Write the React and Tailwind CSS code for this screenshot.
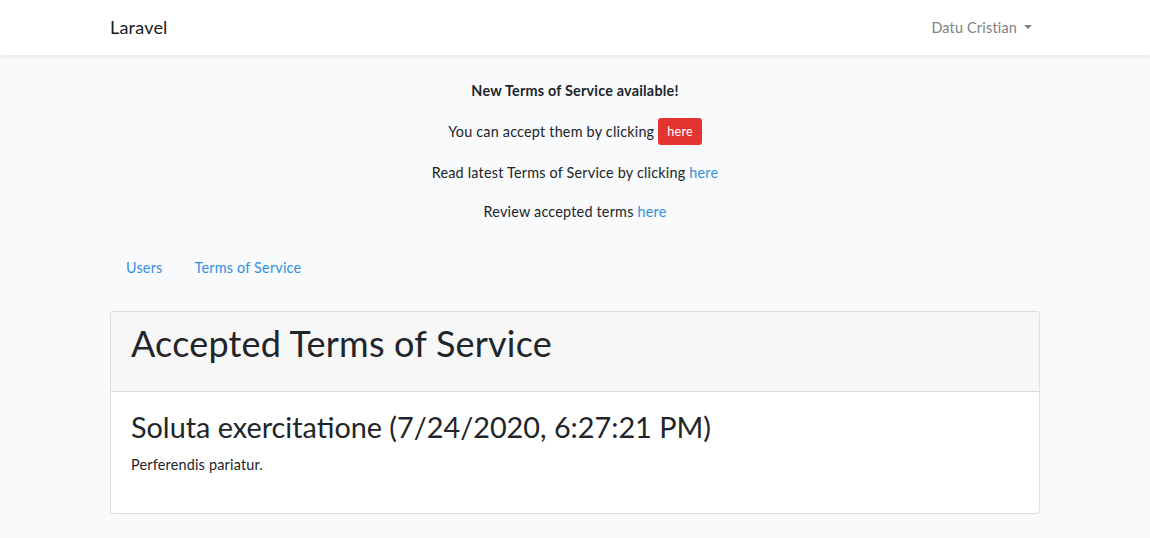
export default function App() {
  return (
    <div className="min-h-screen bg-[#f8fafc] text-[#212529] text-[14.4px] leading-[1.6] tracking-[0.014em]" style={{ fontFamily: "Lato, 'Noto Sans', sans-serif" }}>
      {/* Navbar */}
      <nav className="bg-white h-[55px] shadow-[0_2px_4px_rgba(0,0,0,0.075)]">
        <div className="w-[960px] mx-auto px-[15px] h-full flex items-center justify-between">
          <a className="text-[18px] text-[#1a1a1a]">Laravel</a>
          <a className="flex items-center pr-[8px] text-[#808080]">
            Datu Cristian
            <span className="ml-[7px] w-0 h-0 border-t-[4.5px] border-t-[#808080] border-x-[4.5px] border-x-transparent" />
          </a>
        </div>
      </nav>

      <main className="py-6">
        <div className="w-[960px] mx-auto px-[15px]">
          {/* Notice */}
          <div className="text-center">
            <p className="font-bold mb-4">New Terms of Service available!</p>
            <p className="mb-4 flex items-center justify-center">
              You can accept them by clicking
              <a className="ml-[4px] bg-[#e3342f] text-white text-[12.6px] rounded-[3px] px-[9px] h-[27px] leading-[27px]">here</a>
            </p>
            <p className="mb-4">
              Read latest Terms of Service by clicking <a className="text-[#3490dc]">here</a>
            </p>
            <p className="mb-4">
              Review accepted terms <a className="text-[#3490dc]">here</a>
            </p>
          </div>

          {/* Tabs */}
          <ul className="flex pt-[9px]">
            <li><a className="block px-4 py-2 text-[#3490dc]">Users</a></li>
            <li><a className="block px-4 py-2 text-[#3490dc]">Terms of Service</a></li>
          </ul>

          {/* Card */}
          <div className="mt-[24px] bg-white border border-black/[0.125] rounded-[4px] overflow-hidden">
            <div className="bg-[#f7f7f7] border-b border-black/[0.125] px-5 pt-[10px] pb-[18px]">
              <h1 className="text-[36px] leading-[1.2] mb-2 text-[#212529]">Accepted Terms of Service</h1>
            </div>
            <div className="px-5 pt-[18px] pb-[21px]">
              <h2 className="text-[28.8px] leading-[1.2] mb-2 tracking-normal">Soluta exercitatione (7/24/2020, 6:27:21 PM)</h2>
              <p className="mb-4">Perferendis pariatur.</p>
            </div>
          </div>
        </div>
      </main>
    </div>
  );
}
